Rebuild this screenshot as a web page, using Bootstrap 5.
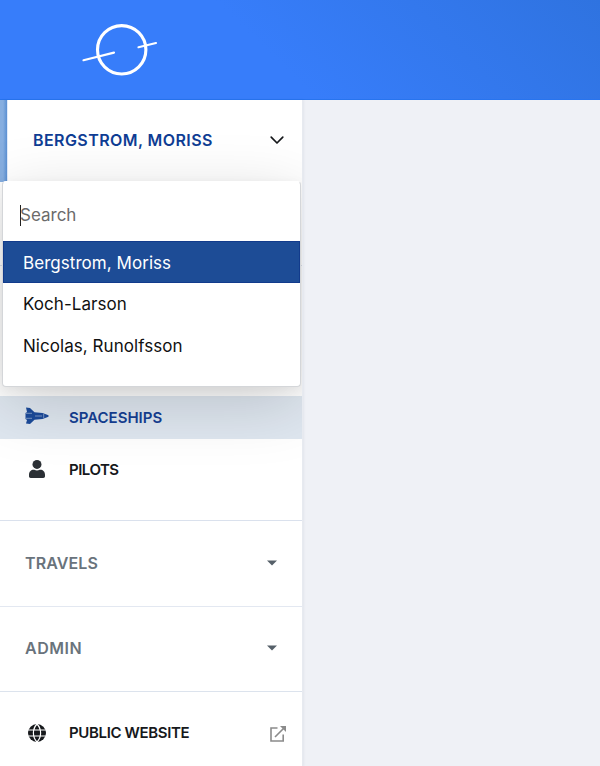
<!DOCTYPE html>
<html lang="en">
<head>
<meta charset="utf-8">
<meta name="viewport" content="width=device-width, initial-scale=1">
<title>Spaceships</title>
<link href="https://cdn.jsdelivr.net/npm/bootstrap@5.3.0/dist/css/bootstrap.min.css" rel="stylesheet">
<style>
body{font-family:Inter,"Liberation Sans",sans-serif;background:#eff1f6;height:766px;overflow:hidden}
.topbar{height:100px;background:linear-gradient(45deg,#377dfa 0%,#377dfa 45%,#2f73e0 100%);border-bottom:1px solid #2874ee}
.topbar svg{margin-left:80px}
.side{width:303px;height:666px;border-right:1px solid #e7eaf0;box-shadow:1px 0 2px rgba(30,50,90,.06)}
.company{height:82px;border-left:7px solid #6c9fdc;border-image:linear-gradient(90deg,#86aee0 0 3px,#5b90d2 7px) 0 0 0 7;box-shadow:inset 1px 0 #dfeafb;padding:0 17px 3px 26px;background:#fff}
.company .title-text{color:#0f3d94;font-weight:600;font-size:16px;letter-spacing:.42px}
.company svg{margin-top:1px}
.under{height:84px;border-bottom:1px solid #dde3ed}
.gap-top{height:130px}
.entry{height:43px;padding-left:25px;font-weight:600;font-size:15px;color:#16181b}
.entry svg{width:24px;height:24px;flex:none}
.entry span{margin-left:20px}
.entry.current{background:#dfe7f0;color:#153f94}
.entry.current svg{margin-top:-3px}
.entry.current span{margin-top:1px}
.pilots{height:64px;padding-bottom:1px}
.entry svg.person{margin-top:-3px}
.pilots span{letter-spacing:-.5px}
.pilot-end{height:17px}
.group-row{height:86px;border-top:1px solid #dae1ed;padding:0 24px 2px 25px;color:#69737c;font-weight:600;font-size:16px;letter-spacing:.12px}
.group-row.admin{height:85px;border-color:#e3e8f1;padding-bottom:3px;letter-spacing:.5px}
.group-row svg{margin-top:1px}
.rest{border-top:1px solid #dce3ed;height:75px}
.rest .entry{height:83px;padding-right:12px}
.rest .entry span{letter-spacing:-.35px}
.entry svg.globe{margin-top:-2px}
.picker{left:2px;top:181px;width:299px;height:206px;border:1px solid #d4d6d9;border-top-color:#fff;border-radius:4px;box-shadow:0 16px 64px rgba(0,0,0,.17),0 3px 12px rgba(0,0,0,.06);clip-path:inset(-81px -1px -120px -2px);font-size:17px;color:#111}
.query{height:59px;padding:8px 0 0 17px;color:#6b6b6b}
.caret-line{width:1px;height:21px;background:#222;margin-right:-1px}
.choice{height:41.5px;padding:3px 0 0 20px;letter-spacing:.05px}
.choice.picked{background:#1d4c96;color:#fff;box-shadow:inset 0 0 0 1px #123b8c}
</style>
<script src="https://cdn.jsdelivr.net/npm/bootstrap@5.3.0/dist/js/bootstrap.bundle.min.js"></script>
</head>
<body>
<header class="topbar d-flex align-items-center">
<svg width="80" height="60" viewBox="80 20 80 60" fill="none" stroke="#fff" stroke-linecap="round"><circle cx="121.700" cy="49.800" r="24.200" stroke-width="3.100"/><path d="M83.500 60.200 114 52.600" stroke-width="2.200"/><path d="M138.500 47.200 156 43" stroke-width="2.200"/></svg>
</header>
<nav class="side bg-white">
<div class="company d-flex align-items-center justify-content-between"><span class="title-text">BERGSTROM, MORISS</span>
<svg width="16" height="10" viewBox="0 0 16 10" fill="none" stroke="#16181b" stroke-width="1.700" stroke-linecap="round" stroke-linejoin="round"><path d="M2.200 2.200 8 8l5.800-5.800"/></svg></div>
<div class="under"></div>
<div class="gap-top"></div>
<div class="entry current d-flex align-items-center">
<svg viewBox="0 0 24 24" fill="#1c4b9b"><path d="M1 3.500 5 4l4.500 4.200 8 .8 6 2.200v1.600l-6 2.200-8 .8L5 20l-4-.5L2 16 .5 15V9L2 8z"/><path d="M1 9.300h6M1 14.300h6M10 12h7M18.700 10v4" stroke="#dfe7f0" stroke-width=".5" fill="none"/></svg>
<span>SPACESHIPS</span></div>
<div class="entry pilots d-flex align-items-center">
<svg class="person" viewBox="0 0 24 24" fill="#2b3035"><circle cx="12" cy="7.400" r="4.500"/><path d="M4 19.300v-1.500c0-3 2-5 4.700-5h.6a6.500 6.500 0 0 0 5.400 0h.6c2.700 0 4.700 2 4.700 5v1.500c0 1.200-.7 1.700-1.700 1.700H5.700C4.700 21 4 20.500 4 19.300z"/></svg>
<span>PILOTS</span></div>
<div class="pilot-end"></div>
<div class="group-row d-flex align-items-center justify-content-between"><span>TRAVELS</span><svg width="12" height="6" viewBox="0 0 12 6" fill="#566069"><path d="M1 .5h10L6 5.500z"/></svg></div>
<div class="group-row admin d-flex align-items-center justify-content-between"><span>ADMIN</span><svg width="12" height="6" viewBox="0 0 12 6" fill="#566069"><path d="M1 .5h10L6 5.500z"/></svg></div>
<div class="rest"><div class="entry d-flex align-items-center">
<svg class="globe" viewBox="0 0 24 24"><circle cx="12" cy="12" r="9" fill="#16181b"/><path d="M3 9h18M3 15h18M12 3c-4.800 5-4.800 13 0 18M12 3c4.800 5 4.800 13 0 18" fill="none" stroke="#fff" stroke-width="1.200"/></svg>
<span>PUBLIC WEBSITE</span>
<svg class="ms-auto" viewBox="0 0 24 24" fill="none" stroke="#8b8b8b" stroke-width="1.600"><path d="M11.500 6H5v13h12.200v-6.500M9 15 18.500 5.500"/><path d="M14 4h6v6z" fill="#8b8b8b" stroke="none"/></svg></div></div>
</nav>
<div class="picker position-absolute bg-white">
<div class="query d-flex align-items-center"><i class="caret-line"></i><span>Search</span></div>
<div class="choice picked d-flex align-items-center"><span>Bergstrom, Moriss</span></div>
<div class="choice d-flex align-items-center"><span>Koch-Larson</span></div>
<div class="choice d-flex align-items-center"><span>Nicolas, Runolfsson</span></div>
</div>
</body>
</html>
